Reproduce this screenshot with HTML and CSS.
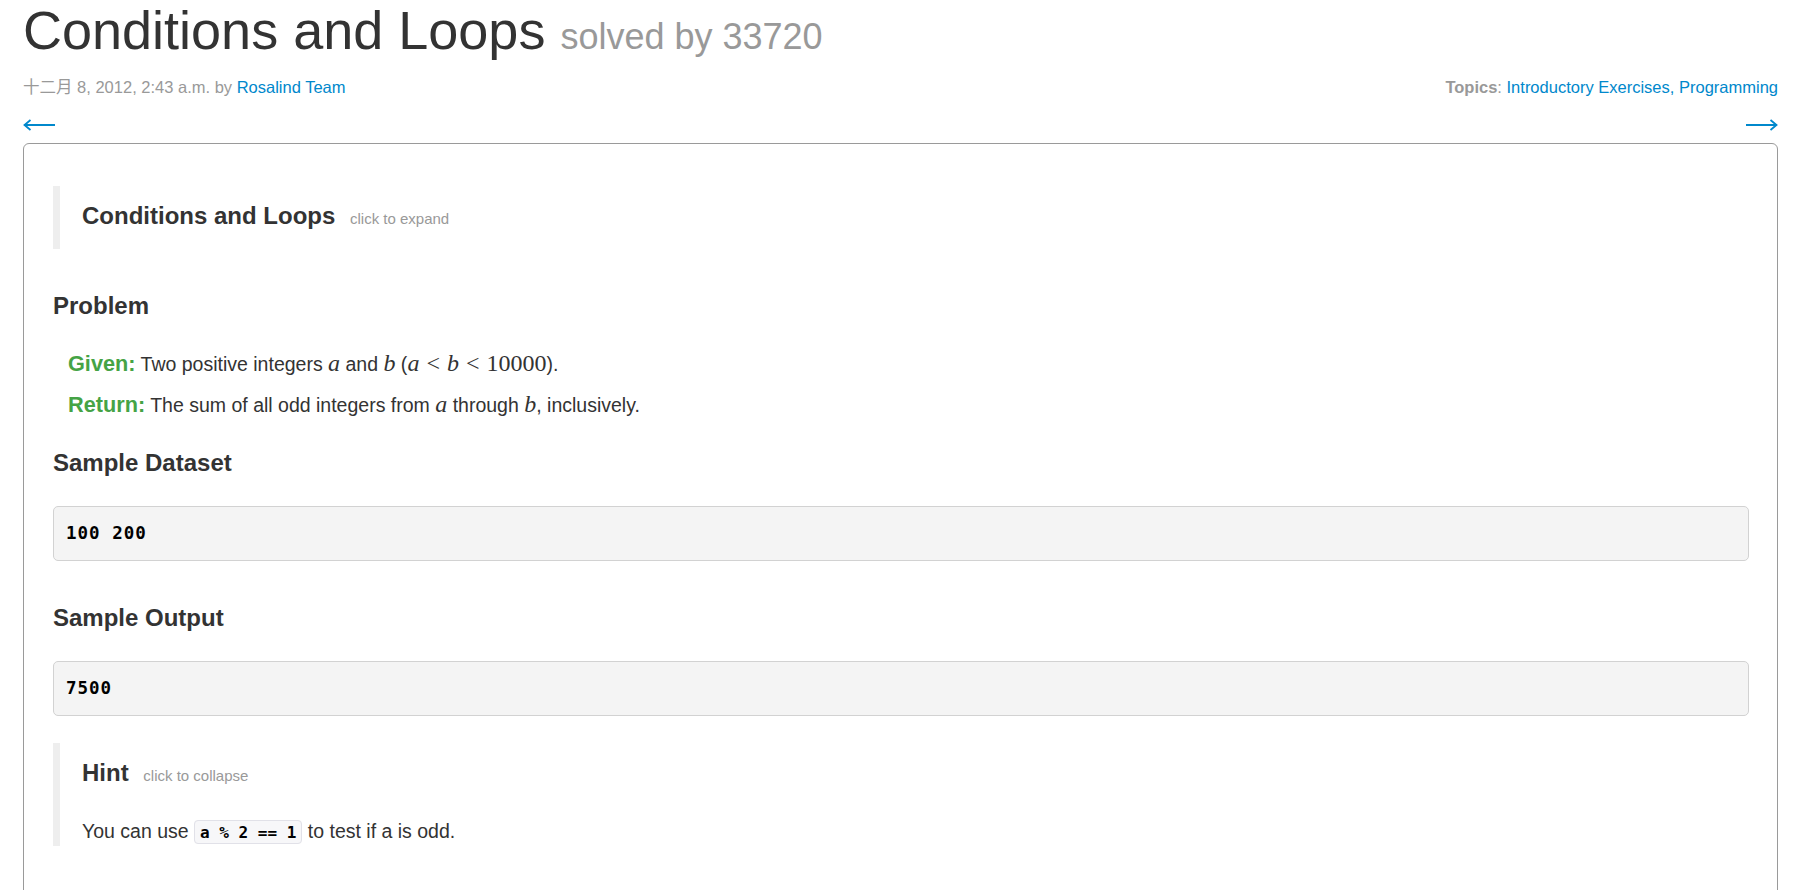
FILE: index.html
```html
<!DOCTYPE html>
<html lang="en">
<head>
<meta charset="utf-8">
<title>Conditions and Loops</title>
<link rel="stylesheet" href="styles.css">
</head>
<body>
<div class="page">
  <h1 class="title">Conditions and Loops <small>solved by 33720</small></h1>
  <div class="meta">
    <div class="meta-date">十二月 8, 2012, 2:43 a.m. by <a href="#">Rosalind Team</a></div>
    <div class="meta-topics"><b>Topics</b>: <a href="#">Introductory Exercises</a><span class="sep">,</span> <a href="#">Programming</a></div>
  </div>
  <div class="nav">
    <a href="#" class="nav-arrow"><svg viewBox="0 0 33 12"><path d="M1 6H32M7.5 1L1.5 6L7.5 11" fill="none" stroke="currentColor" stroke-width="1.8"/></svg></a>
    <a href="#" class="nav-arrow"><svg viewBox="0 0 33 12"><path d="M1 6H32M25.5 1L31.5 6L25.5 11" fill="none" stroke="currentColor" stroke-width="1.8"/></svg></a>
  </div>
  <div class="problem-box">
    <blockquote class="collapsible is-collapsed">
      <h4>Conditions and Loops <small>click to expand</small></h4>
    </blockquote>

    <h4 class="section">Problem</h4>
    <div class="statement">
      <p><strong class="lbl">Given:</strong> Two positive integers <span class="mi">a</span> and <span class="mi">b</span> (<span class="mi">a</span><span class="mo">&lt;</span><span class="mi">b</span><span class="mo">&lt;</span><span class="mn">10000</span>).</p>
      <p><strong class="lbl">Return:</strong> The sum of all odd integers from <span class="mi">a</span> through <span class="mi">b</span>, inclusively.</p>
    </div>

    <h4 class="section">Sample Dataset</h4>
    <pre class="sample">100 200</pre>

    <h4 class="section">Sample Output</h4>
    <pre class="sample">7500</pre>

    <blockquote class="collapsible is-open">
      <h4>Hint <small>click to collapse</small></h4>
      <p>You can use <code>a % 2 == 1</code> to test if a is odd.</p>
    </blockquote>
  </div>
</div>
</body>
</html>
```

FILE: styles.css
```css
body {
  margin: 0;
  background: #fff;
  color: #333;
  font-family: "Liberation Sans", Arial, "Noto Sans CJK SC", sans-serif;
  font-size: 19.5px;
  line-height: 27.5px;
}

a {
  color: #0088cc;
  text-decoration: none;
}

.page {
  padding: 0 27px 0 23px;
}

.title {
  margin: 1px 0 0;
  font-size: 54px;
  line-height: 58px;
  font-weight: normal;
  color: #333;
}

.title small {
  font-size: 36px;
  line-height: 1;
  color: #999;
}

.meta {
  display: flex;
  justify-content: space-between;
  margin-top: 17px;
  font-size: 16.5px;
  line-height: 22px;
  color: #999;
}

.meta-topics b {
  color: #999;
}

.meta-topics .sep {
  color: #0088cc;
}

.nav {
  display: flex;
  justify-content: space-between;
  align-items: center;
  height: 16px;
  margin-top: 19px;
}

.nav-arrow {
  display: block;
  color: #0088cc;
}

.nav-arrow svg {
  display: block;
  width: 33px;
  height: 12px;
}

.problem-box {
  margin-top: 10px;
  border: 1px solid #9a9a9a;
  border-radius: 6px;
  padding: 42px 28px 140px 29px;
}

.collapsible {
  margin: 0;
  border-left: 7px solid #eee;
  padding: 16px 0 0 22px;
}

.collapsible h4 {
  margin: 0;
  font-size: 24px;
  line-height: 27.5px;
  font-weight: bold;
  color: #333;
}

.collapsible h4 small {
  margin-left: 8px;
  font-size: 15px;
  line-height: 1;
  font-weight: normal;
  color: #999;
}

.collapsible.is-collapsed {
  padding-bottom: 19px;
  margin-bottom: 43px;
}

.collapsible.is-open {
  padding-bottom: 1px;
}

.collapsible p {
  margin: 31.5px 0 0;
}

.section {
  margin: 0 0 30px;
  font-size: 24px;
  line-height: 27.5px;
  font-weight: bold;
  color: #333;
}

.statement {
  padding: 1.5px 0 0 15px;
}

.statement p {
  margin: 0 0 13.5px;
}

.statement + .section {
  margin-top: 30px;
  margin-bottom: 29px;
}

.lbl {
  font-size: 21.7px;
  line-height: 1;
  color: #45a345;
}

.mi,
.mn,
.mo {
  font-family: "Liberation Serif", "Times New Roman", serif;
  font-size: 24px;
  line-height: 1;
}

.mi {
  font-style: italic;
}

.mo {
  margin: 0 7px;
}

.sample {
  margin: 0;
  padding: 13px 12px;
  border: 1px solid #d2d2d2;
  border-radius: 5px;
  background: #f4f4f4;
  color: #000;
  font-family: "DejaVu Sans Mono", monospace;
  font-weight: bold;
  font-size: 17.5px;
  line-height: 27px;
  letter-spacing: 1px;
}

.sample + .section {
  margin-top: 43.6px;
  margin-bottom: 29px;
}

.sample + .collapsible {
  margin-top: 27px;
}

code {
  padding: 1.5px 5px;
  border: 1px solid #e1e1e8;
  border-radius: 4px;
  background: #f7f7f9;
  color: #000;
  font-family: "DejaVu Sans Mono", monospace;
  font-weight: bold;
  font-size: 16px;
  line-height: 1;
}
```
